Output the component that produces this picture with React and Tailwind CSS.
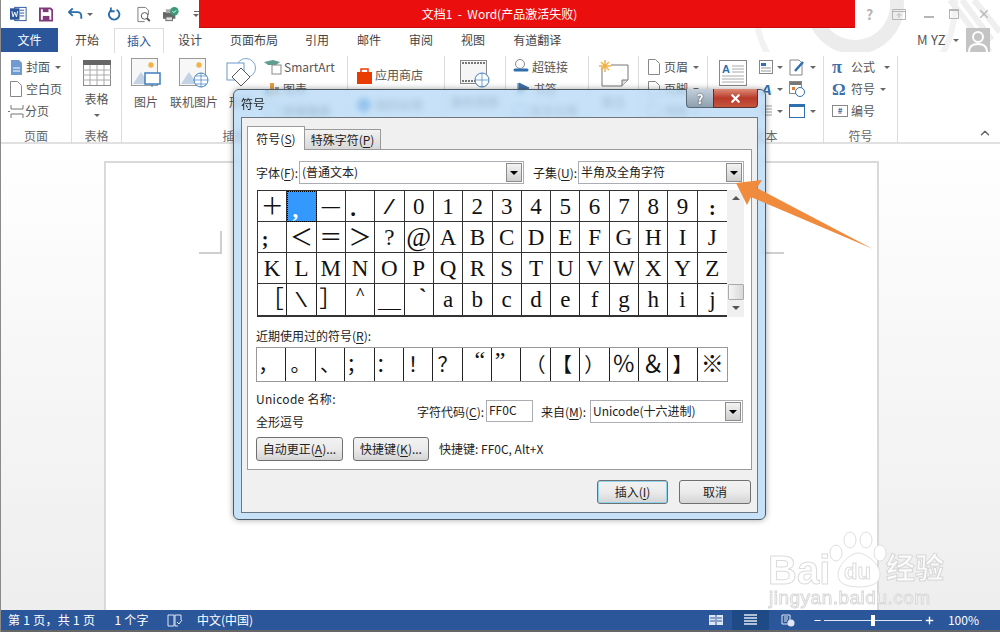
import React from 'react';
import { ChevronUp, Minus, Plus, X } from 'lucide-react';

const FONT = { fontFamily: '"Noto Sans CJK SC", sans-serif' };

const TABS = ['开始', '插入', '设计', '页面布局', '引用', '邮件', '审阅', '视图', '有道翻译'];
const SYMBOLS = [
  '＋', ',', '—', '.', '/', '0', '1', '2', '3', '4', '5', '6', '7', '8', '9', ':',
  ';', '＜', '＝', '＞', '?', '@', 'A', 'B', 'C', 'D', 'E', 'F', 'G', 'H', 'I', 'J',
  'K', 'L', 'M', 'N', 'O', 'P', 'Q', 'R', 'S', 'T', 'U', 'V', 'W', 'X', 'Y', 'Z',
  '［', '\\', '］', '^', '＿', '`', 'a', 'b', 'c', 'd', 'e', 'f', 'g', 'h', 'i', 'j',
];
const RECENT = ['，', '。', '、', '；', '：', '！', '？', '“', '”', '（', '【', '）', '％', '＆', '】', '※'];

// full-width glyphs sit off centre in their cell, same as the Word picker
const GLYPH_CLASS = {
  ',': 'font-bold -translate-x-[6px] translate-y-[3px]',
  '—': 'font-bold text-[18px]',
  '.': 'font-bold -translate-x-[7px] translate-y-[2px]',
  '/': 'scale-x-[1.8]',
  '\\': 'scale-x-[1.8]',
  ':': 'font-bold text-[20px] translate-y-[2px]',
  ';': 'font-bold text-[20px] -translate-x-[7px] translate-y-[2px]',
  '^': 'font-bold text-[17px] -translate-y-[6px]',
  '`': 'font-bold translate-x-[4px] -translate-y-[2px]',
  '@': 'text-[27px]',
  '“': 'text-[24px] translate-x-[3px] -translate-y-[5px]',
  '”': 'text-[24px] -translate-x-[6px] -translate-y-[5px]',
  '％': 'text-[23px]',
  '＆': 'text-[23px]',
  '※': 'text-[23px]',
  '，': '-translate-x-[3px]',
  '；': '-translate-x-[3px]',
  '：': '-translate-x-[3px]',
  '【': '-translate-x-[3px]',
};

function Caret({ className = '' }) {
  return <span className={`inline-block w-0 h-0 border-x-[3px] border-x-transparent border-t-[3px] border-t-[#666] ${className}`} />;
}

function TitleIcons() {
  return (
    <div className="flex items-center h-[28px] pl-[10px]">
      <svg width="18" height="16" viewBox="0 0 18 16" className="mr-[12px]">
        <rect x="5" y="1" width="12" height="14" fill="#fff" stroke="#2b579a" />
        <path d="M10 4h5M10 7h5M10 10h5" stroke="#2b579a" />
        <rect x="0" y="2" width="10" height="12" fill="#2b579a" />
        <path d="M2 5l1.2 6 1.8-5 1.800 5L8 5" fill="none" stroke="#fff" />
      </svg>
      <svg width="15" height="15" viewBox="0 0 15 15" className="mr-[15px]">
        <path d="M1 1h11l2 2v11H1z" fill="none" stroke="#80397b" strokeWidth="2" />
        <path d="M4 1h6v4H4z" fill="#80397b" />
        <rect x="4" y="9" width="7" height="5" fill="#80397b" />
      </svg>
      <svg width="16" height="14" viewBox="0 0 16 14" className="mr-[4px]">
        <path d="M5 1L1 5l4 4M1 5h9a4 4 0 0 1 4 4v3" fill="none" stroke="#2b6cab" strokeWidth="2" />
      </svg>
      <Caret className="mr-[15px]" />
      <svg width="14" height="15" viewBox="0 0 14 15" className="mr-[15px]">
        <path d="M9 2.500a5.500 5.500 0 1 1-5 0M3 0v4h4" fill="none" stroke="#2b6cab" strokeWidth="2" />
      </svg>
      <svg width="15" height="17" viewBox="0 0 15 17" className="mr-[12px]">
        <path d="M1 1h8l3 3v5M1 1v15h7" fill="none" stroke="#777" />
        <circle cx="8" cy="10" r="3.500" fill="#fff" stroke="#555" />
        <path d="M10.500 12.500l3 3" stroke="#555" strokeWidth="2" />
      </svg>
      <svg width="18" height="16" viewBox="0 0 18 16" className="mr-[13px]">
        <rect x="0" y="6" width="13" height="7" fill="#666" />
        <rect x="3" y="3" width="7" height="4" fill="#aaa" />
        <rect x="3" y="11" width="7" height="4" fill="#ddd" stroke="#666" />
        <circle cx="12" cy="5" r="4.500" fill="#3a9b78" />
        <path d="M10 5l1.500 1.500L14 4" fill="none" stroke="#fff" />
      </svg>
      <span className="flex flex-col items-center gap-[2px]">
        <span className="w-[5px] h-px bg-[#666]" />
        <Caret />
      </span>
    </div>
  );
}

function WindowControls() {
  return (
    <div className="flex items-center h-[28px] text-[#b5b5b5]">
      <span className="w-[29px] text-center text-[14px] font-bold">?</span>
      <svg width="14" height="11" viewBox="0 0 14 11" className="mx-[8px]">
        <path d="M.5.5h13v10H.5zM.5 2.500h13M7 9V5M5 6.500L7 4.500l2 2" fill="none" stroke="#b5b5b5" />
      </svg>
      <span className="w-[10px] h-[2px] bg-[#b5b5b5] ml-[10px] mr-[6px] mt-[5px]" />
      <span className="w-[10px] h-[10px] border border-[#b5b5b5] border-t-2 mx-[9px]" />
      <X size={14} strokeWidth={2} className="mx-[9px]" />
    </div>
  );
}

function RowItem({ icon, text, caret, caretClass = 'ml-[5px]', className = '' }) {
  return (
    <div className={`flex items-center h-[22px] whitespace-nowrap ${className}`}>
      {icon}
      {text && <span>{text}</span>}
      {caret && <Caret className={caretClass} />}
    </div>
  );
}

function Big({ icon, text, className = '' }) {
  return (
    <div className={`flex flex-col items-center whitespace-nowrap ${className}`}>
      <div className="h-[34px] flex items-center">{icon}</div>
      <span className="mt-[4px] leading-[16px]">{text}</span>
    </div>
  );
}

function Group({ width, label, children, className = '' }) {
  return (
    <div style={{ width }} className={`relative shrink-0 h-[88px] border-r border-[#dcdcdc] flex flex-col ${className}`}>
      <div className="flex-1 min-h-0">{children}</div>
      <div className="h-[16px] leading-[16px] text-center text-[#666]">{label}</div>
    </div>
  );
}

function PicIcon({ children }) {
  return (
    <svg width="30" height="30" viewBox="0 0 30 30">
      <rect x=".5" y=".5" width="26" height="27" fill="#f7f7f7" stroke="#999" />
      <circle cx="20" cy="7" r="2.700" fill="#f0b44b" />
      <path d="M2 26l8-12 8 12z" fill="#c3d3e6" />
      {children}
    </svg>
  );
}

function Ribbon() {
  const doc = (
    <svg width="12" height="16" viewBox="0 0 12 16" className="mr-[4px]">
      <path d="M.5.5h7l4 4v11H.5z" fill="#fff" stroke="#888" />
    </svg>
  );
  return (
    <div className="flex h-[92px] pt-[4px] border-b-2 border-[#e1e1e1] text-[12px] text-[#555] bg-white">
      <Group width={71} label="页面">
        <div className="pl-[9px]">
          <RowItem text="封面" caret icon={<svg width="13" height="17" viewBox="0 0 13 17" className="mr-[3px]"><path d="M1 1h8l3 3v12H1z" fill="#6f9bd1" /><path d="M3 9h7M3 12h7" stroke="#fff" /></svg>} />
          <RowItem text="空白页" icon={doc} />
          <RowItem text="分页" icon={<svg width="16" height="15" viewBox="0 0 16 15" className="-ml-[2px] mr-px"><path d="M3 1v4h12V1M3 14v-4h12v4M0 7.500h2" fill="none" stroke="#777" /></svg>} />
        </div>
      </Group>
      <Group width={50} label="表格">
        <div className="flex flex-col items-center pt-[4px]">
          <svg width="28" height="26" viewBox="0 0 28 26">
            <rect x=".5" y=".5" width="27" height="25" fill="#fff" stroke="#8a8a8a" />
            <rect width="28" height="5" fill="#666" />
            <path d="M7 5v20M14 5v20M21 5v20M0 10h28M0 15h28M0 20h28" stroke="#aaa" />
          </svg>
          <span className="mt-[5px] leading-[16px]">表格</span>
          <Caret className="mt-[7px]" />
        </div>
      </Group>
      <Group width={226} label="插图">
        <div className="flex pl-[7px]">
          <Big text="图片" className="w-[34px]" icon={<PicIcon><rect x="14" y="15" width="15" height="11" fill="#fff" stroke="#3f7fbf" strokeWidth="1.500" /><path d="M21 26v3" stroke="#3f7fbf" /></PicIcon>} />
          <Big text="联机图片" className="w-[48px] ml-[7px]" icon={<PicIcon><circle cx="22" cy="22" r="7" fill="#fff" stroke="#3f7fbf" /><path d="M15 22h14M22 15v14M17 18h10M17 26h10" stroke="#3f7fbf" strokeWidth=".7" /></PicIcon>} />
          <Big text="形状" className="w-[40px] ml-[3px]" icon={<svg width="30" height="30" viewBox="0 0 30 30"><circle cx="20" cy="10" r="9.500" fill="#fff" stroke="#7aa7d4" /><rect x="1" y="5" width="17" height="17" fill="#fff" stroke="#6b9bc9" /><path d="M15 10l9 9-9 9-9-9z" fill="#fff" stroke="#555" /></svg>} />
          <div className="ml-[3px]">
            <RowItem text="SmartArt" icon={<svg width="18" height="16" viewBox="0 0 18 16" className="mr-[2px]"><path d="M0 3l9-2 7 2-4 3H4z" fill="#5f9e8f" /><rect x="8" y="6" width="9" height="9" fill="#fff" stroke="#888" /></svg>} />
            <RowItem text="图表" icon={<svg width="16" height="14" viewBox="0 0 16 14" className="mr-[3px]"><path d="M1 8h4v6H1z" fill="#3f6fa8" /><path d="M6 1h4v13H6z" fill="#e0a040" /><path d="M11 5h4v9h-4z" fill="#999" /></svg>} />
            <RowItem text="屏幕截图" icon={<svg width="16" height="14" viewBox="0 0 16 14" className="mr-[3px]"><rect x=".5" y=".5" width="15" height="10" fill="#fff" stroke="#5d88b8" /></svg>} />
          </div>
        </div>
      </Group>
      <Group width={97} label="应用程序">
        <div className="pl-[9px] pt-[8px]">
          <RowItem text="应用商店" icon={<svg width="15" height="17" viewBox="0 0 15 17" className="mr-[3px]"><path d="M0 5h15v12H0z" fill="#eb3c00" /><path d="M4 5V2h7v3" fill="none" stroke="#eb3c00" strokeWidth="1.500" /></svg>} />
          <RowItem text="我的应用" className="mt-[8px]" icon={<span className="w-[14px] h-[14px] rounded-full bg-[#2f7fd0] mr-[4px]" />} />
        </div>
      </Group>
      <Group width={61} label="媒体">
        <div className="flex justify-center">
          <Big text="联机视频" icon={<svg width="30" height="30" viewBox="0 0 30 30"><rect x=".5" y="2.500" width="26" height="23" fill="#f5f5f5" stroke="#888" /><path d="M2 5h23M2 23h23" stroke="#777" strokeWidth="2" strokeDasharray="2 1" /><circle cx="22" cy="22" r="7" fill="#fff" stroke="#3f7fbf" /><path d="M15 22h14M22 15v14" stroke="#3f7fbf" strokeWidth=".7" /></svg>} />
        </div>
      </Group>
      <Group width={83} label="链接">
        <div className="pl-[7px]">
          <RowItem text="超链接" icon={<svg width="16" height="16" viewBox="0 0 16 16" className="mr-[3px]"><circle cx="7" cy="5" r="4.500" fill="#fff" stroke="#888" /><path d="M2 11h5M9 11h5" stroke="#2f6fb0" strokeWidth="3" strokeLinecap="round" /></svg>} />
          <RowItem text="书签" icon={<svg width="14" height="14" viewBox="0 0 14 14" className="mx-[3px]"><path d="M2 1v12M3 1l10 5-10 5z" fill="#3f6fa8" stroke="#3f6fa8" /></svg>} />
          <RowItem text="交叉引用" icon={<svg width="14" height="14" viewBox="0 0 14 14" className="mr-[3px]"><rect x="1" y="1" width="12" height="12" fill="#fff" stroke="#5d88b8" /></svg>} />
        </div>
      </Group>
      <Group width={50} label="批注">
        <div className="flex justify-center">
          <Big text="批注" icon={<svg width="30" height="28" viewBox="0 0 30 28"><path d="M3 8v19h20l6-6V6H12" fill="#fff" stroke="#777" /><path d="M23 27v-6h6" fill="#ddd" stroke="#777" /><path d="M6 1v12M0 7h12M2 3l8 8M10 3l-8 8" stroke="#f0b44b" strokeWidth="1.500" /></svg>} />
        </div>
      </Group>
      <Group width={69} label="页眉和页脚">
        <div className="pl-[9px]">
          <RowItem text="页眉" caret icon={doc} />
          <RowItem text="页脚" caret icon={doc} />
          <RowItem text="页码" caret icon={doc} />
        </div>
      </Group>
      <Group width={116} label="文本">
        <div className="flex pl-[11px]">
          <svg width="28" height="26" viewBox="0 0 28 26" className="mt-[4px] shrink-0">
            <rect x=".5" y=".5" width="27" height="25" fill="#fff" stroke="#888" />
            <text x="3" y="13" fontSize="11" fontWeight="700" fill="#2f6fb0" fontFamily="Liberation Sans">A</text>
            <path d="M13 6h12M13 9h12M13 12h12M3 16h22M3 19h22M3 22h22" stroke="#aaa" />
          </svg>
          <div className="ml-[12px] w-[30px]">
            <RowItem caret caretClass="ml-[4px]" icon={<svg width="14" height="14" viewBox="0 0 14 14"><rect x=".5" y=".5" width="13" height="13" fill="#fff" stroke="#888" /><rect x="2" y="3" width="5" height="3" fill="#2f6fb0" /><path d="M2 8h10M2 11h10" stroke="#999" /></svg>} />
            <RowItem caret caretClass="ml-[4px]" icon={<svg width="14" height="14" viewBox="0 0 14 14"><text x="2" y="13" fontSize="15" fontStyle="italic" fontWeight="700" fill="#2f6fb0" fontFamily="Liberation Sans">A</text></svg>} />
            <RowItem caret caretClass="ml-[4px]" icon={<svg width="14" height="14" viewBox="0 0 14 14"><path d="M1 2h12M1 5h12M1 8h12M1 11h12" stroke="#999" /></svg>} />
          </div>
          <div>
            <RowItem caret caretClass="ml-[5px]" icon={<svg width="16" height="17" viewBox="0 0 16 17"><path d="M1 1h9l3 3v12H1z" fill="#fff" stroke="#888" /><path d="M6 12l8-9" stroke="#2f6fb0" strokeWidth="2.500" /></svg>} />
            <RowItem icon={<svg width="16" height="16" viewBox="0 0 16 16"><rect x=".5" y=".5" width="12" height="12" fill="#fff" stroke="#888" /><rect x="1" y="1" width="11" height="3" fill="#777" /><rect x="3" y="6" width="3" height="3" fill="#e07a30" /><circle cx="11" cy="11" r="4.500" fill="#fff" stroke="#2f6fb0" /></svg>} />
            <RowItem caret caretClass="ml-[5px]" icon={<svg width="16" height="14" viewBox="0 0 16 14"><rect x=".5" y=".5" width="15" height="13" fill="#fff" stroke="#2f6fb0" /><rect width="16" height="3" fill="#2f6fb0" /></svg>} />
          </div>
        </div>
      </Group>
      <Group width={74} label="符号">
        <div className="pl-[8px]">
          <div className="flex items-center h-[22px]">
            <span className="w-[19px] text-[18px] leading-none font-bold text-[#3f6fa8]" style={{ fontFamily: '"Liberation Serif", serif' }}>π</span>
            <span>公式</span>
            <Caret className="ml-[9px]" />
          </div>
          <div className="flex items-center h-[22px]">
            <span className="w-[19px] text-[17px] leading-none font-bold text-[#3f6fa8]" style={{ fontFamily: '"Liberation Serif", serif' }}>Ω</span>
            <span>符号</span>
            <Caret className="ml-[5px]" />
          </div>
          <div className="flex items-center h-[22px]">
            <span className="w-[19px]">
              <span className="flex items-center justify-center w-[16px] h-[12px] border border-[#888] text-[8px] leading-none text-[#2f6fb0] font-bold">#</span>
            </span>
            <span>编号</span>
          </div>
        </div>
      </Group>
      <div className="flex-1 flex items-end justify-end pr-[8px] pb-[2px]">
        <ChevronUp size={14} strokeWidth={2.5} color="#666" />
      </div>
    </div>
  );
}

function ComboBox({ text, className = '' }) {
  return (
    <div className={`flex h-[23px] border border-[#abadb3] bg-white ${className}`}>
      <span className="flex-1 pl-[2px] leading-[20px] text-[#222] whitespace-nowrap">{text}</span>
      <span className="w-[16px] m-px flex items-center justify-center border border-[#8c8c8c] bg-gradient-to-b from-[#f3f3f3] to-[#cfcfcf]">
        <span className="w-0 h-0 border-x-[4px] border-x-transparent border-t-[4px] border-t-black" />
      </span>
    </div>
  );
}

function DialogButton({ children, className = '' }) {
  return (
    <div className={`flex items-center justify-center rounded-[3px] border border-[#707070] bg-gradient-to-b from-[#f2f2f2] via-[#ebebeb] to-[#d4d4d4] text-[#222] ${className}`}>
      {children}
    </div>
  );
}

function Key({ children }) {
  return <span className="underline underline-offset-2">{children}</span>;
}

function SymbolCell({ ch, selected, last, bottom }) {
  return (
    <div className={`flex items-center justify-center overflow-hidden ${last ? '' : 'border-r-[1.5px] border-[#222]'} ${bottom ? '' : 'border-b-[1.5px] border-[#333]'} ${selected ? 'bg-[#3399ff] text-white outline-1 outline-dotted outline-black -outline-offset-1' : 'text-[#111]'}`}>
      <span className={`inline-block ${GLYPH_CLASS[ch] || ''}`}>{ch}</span>
    </div>
  );
}

function SymbolDialog() {
  const serif = { fontFamily: '"Liberation Serif", "Noto Sans CJK SC", serif' };
  return (
    <div className="absolute left-[232px] top-[89px] w-[533px] h-[431px] rounded-[6px] border border-[#4d5a66] bg-[#b4d8f6]/75 backdrop-blur-[3px] shadow-[0_0_6px_rgba(0,0,0,0.35)] text-[12px] text-[#222] flex flex-col">
      <div className="relative h-[27px] shrink-0 pl-[7px] leading-[27px] text-[#222]">
        符号
        <div className="absolute right-[7px] -top-px flex h-[19px]">
          <div className="w-[27px] flex items-center justify-center rounded-bl-[4px] border border-t-0 border-r-0 border-[#5a6670] bg-gradient-to-b from-[#c4d0dc] to-[#8fa0b0]">
            <span className="text-[13px] leading-none font-bold text-white [text-shadow:0_0_2px_#333]">?</span>
          </div>
          <div className="w-[45px] flex items-center justify-center rounded-br-[4px] border border-t-0 border-[#5a3030] bg-gradient-to-b from-[#dd8a78] via-[#b8392a] to-[#c4553f]">
            <X size={13} strokeWidth={4} color="#fff" />
          </div>
        </div>
      </div>
      <div className="flex-1 mx-[7px] mb-[6px] border border-[#6e7780] bg-[#f0f0f0] px-[5px] pt-[8px] flex flex-col">
        <div className="flex items-end h-[24px] relative z-10">
          <div className="w-[58px] h-[24px] bg-white border border-b-0 border-[#9a9a9a] text-center leading-[24px]">符号(<Key>S</Key>)</div>
          <div className="w-[76px] h-[21px] bg-gradient-to-b from-[#f2f2f2] to-[#d8d8d8] border border-l-0 border-[#9a9a9a] text-center leading-[20px]">特殊字符(<Key>P</Key>)</div>
        </div>
        <div className="h-[321px] -mt-px border border-[#9a9a9a] bg-white pl-[8px] pt-[11px]">
          <div className="flex items-center">
            <span className="w-[43px]">字体(<Key>F</Key>):</span>
            <ComboBox text="(普通文本)" className="w-[225px]" />
            <span className="ml-[9px] w-[45px]">子集(<Key>U</Key>):</span>
            <ComboBox text="半角及全角字符" className="w-[166px]" />
          </div>
          <div className="flex mt-[6px]">
            <div className="w-[470px] h-[127px] ml-px border-t-[1.5px] border-l-[1.5px] border-b-[2px] border-[#333] grid grid-cols-16 grid-rows-4 text-[23px] leading-none" style={serif}>
              {SYMBOLS.map((ch, i) => (
                <SymbolCell key={i} ch={ch} selected={i === 1} last={(i + 1) % 16 === 0} bottom={i >= 48} />
              ))}
            </div>
            <div className="w-[17px] h-[127px] bg-[#f0f0f0] flex flex-col items-center">
              <span className="mt-[6px] w-0 h-0 border-x-[4px] border-x-transparent border-b-[4px] border-b-[#555]" />
              <span className="mt-auto w-[16px] h-[16px] border border-[#aaa] rounded-[1px] bg-gradient-to-r from-[#f6f6f6] to-[#d8d8d8]" />
              <span className="mt-[6px] mb-[7px] w-0 h-0 border-x-[4px] border-x-transparent border-t-[4px] border-t-[#555]" />
            </div>
          </div>
          <div className="mt-[10px] leading-[18px]">近期使用过的符号(<Key>R</Key>):</div>
          <div className="w-[472px] h-[35px] mt-[2px] border border-[#999] grid grid-cols-16 text-[20px] leading-none" style={serif}>
            {RECENT.map((ch, i) => (
              <SymbolCell key={i} ch={ch} last={i === 15} bottom />
            ))}
          </div>
          <div className="flex mt-[7px] h-[48px]">
            <div className="w-[161px] pt-[1px]">
              <div className="leading-[18px] tracking-[0.3px]">Unicode 名称:</div>
              <div className="mt-[5px] leading-[18px]">全形逗号</div>
            </div>
            <div className="flex items-start pt-[11px]">
              <span className="w-[69px] mt-[3px]">字符代码(<Key>C</Key>):</span>
              <div className="w-[47px] h-[22px] border border-[#abadb3] bg-white pl-[2px] leading-[18px]">FF0C</div>
              <span className="ml-[8px] w-[49px] mt-[3px]">来自(<Key>M</Key>):</span>
              <ComboBox text="Unicode(十六进制)" className="w-[153px]" />
            </div>
          </div>
          <div className="flex items-center">
            <DialogButton className="w-[87px] h-[24px]">自动更正(<Key>A</Key>)...</DialogButton>
            <DialogButton className="w-[76px] h-[24px] ml-[10px]">快捷键(<Key>K</Key>)...</DialogButton>
            <span className="ml-[10px]">快捷键: FF0C, Alt+X</span>
          </div>
        </div>
        <div className="flex justify-end gap-[11px] pr-[1px] mt-[10px]">
          <DialogButton className="w-[71px] h-[24px] border-[#3c9fc8] shadow-[inset_0_0_0_1px_#8fd4ee]">插入(<Key>I</Key>)</DialogButton>
          <DialogButton className="w-[72px] h-[24px]">取消</DialogButton>
        </div>
      </div>
    </div>
  );
}

function StatusBar() {
  return (
    <div className="shrink-0 h-[22px] border-b-2 border-[#666] bg-[#2b579a] flex items-center text-[12px] text-white">
      <span className="ml-[7px] whitespace-pre tracking-[0.3px]">第 1 页，共 1 页</span>
      <span className="ml-[19px] whitespace-pre tracking-[0.3px]">1 个字</span>
      <svg width="16" height="13" viewBox="0 0 16 13" className="ml-[18px]">
        <path d="M1 1h6v11H1zM8 1h6v5M8 1v11h3M10 8l2 2 3-4" fill="none" stroke="#dfe7f3" />
      </svg>
      <span className="ml-[14px]">中文(中国)</span>
      <div className="ml-auto flex items-center h-full">
        <svg width="14" height="12" viewBox="0 0 14 12">
          <path d="M0 1h6.500v10H0zM7.500 1H14v10H7.500z" fill="#dfe7f3" />
          <path d="M1 4h5M1 7h5M8 4h5M8 7h5" stroke="#2b579a" />
        </svg>
        <div className="ml-[9px] w-[37px] h-full bg-[#1e4a86] flex items-center justify-center">
          <svg width="13" height="12" viewBox="0 0 13 12"><path d="M0 1h13M0 4h13M0 7h13M0 10h13" stroke="#dfe7f3" strokeWidth="1.500" /></svg>
        </div>
        <svg width="14" height="13" viewBox="0 0 14 13" className="ml-[12px]">
          <path d="M1 1h8v9H1z" fill="none" stroke="#dfe7f3" />
          <path d="M3 3h4M3 5h4M3 7h3" stroke="#dfe7f3" />
          <circle cx="10" cy="9" r="3.500" fill="#dfe7f3" />
        </svg>
        <Minus size={9} strokeWidth={3} className="ml-[18px]" />
        <div className="relative ml-[2px] w-[98px] h-px bg-[#dfe7f3]">
          <span className="absolute left-[47px] -top-[5px] w-[4px] h-[11px] bg-white" />
        </div>
        <Plus size={11} strokeWidth={3} className="ml-[2px]" />
        <span className="ml-[13px] mr-[21px]">100%</span>
      </div>
    </div>
  );
}

export default function App() {
  return (
    <div className="relative w-[1000px] h-[632px] overflow-hidden bg-white border-l border-[#8a8a8a] flex flex-col" style={FONT}>
      <svg className="absolute right-0 top-0" width="300" height="52" viewBox="0 0 300 52">
        <circle cx="155" cy="5" r="42" fill="none" stroke="#ececec" strokeWidth="14" />
        <circle cx="155" cy="5" r="100" fill="none" stroke="#f2f2f2" strokeWidth="6" />
        <path d="M250 0l40 52M262 0l30 40M274 0l26 32" stroke="#efefef" strokeWidth="6" />
      </svg>
      <div className="relative flex h-[28px] shrink-0 -ml-px">
        <div className="w-[199px]"><TitleIcons /></div>
        <div className="w-[657px] h-[28px] pr-[55px] bg-[#ea0e0e] border-b border-[#c50d0d] text-white text-[12px] text-center leading-[27px] whitespace-pre">文档1  -  Word(产品激活失败)</div>
        <div className="flex-1"><WindowControls /></div>
      </div>
      <div className="relative flex h-[24px] shrink-0 text-[12px] text-[#444]">
        <div className="w-[57px] bg-[#2b579a] text-white text-center leading-[24px] mr-[3px]">文件</div>
        {TABS.map((t) => (
          <div key={t} className={t === '插入' ? 'px-[12px] h-[25px] ml-px leading-[24px] bg-white border border-b-0 border-[#dcdcdc] text-[#2b579a] relative z-10' : t === '页面布局' ? 'pl-[14px] pr-[13px] leading-[24px]' : 'px-[14px] leading-[24px]'}>{t}</div>
        ))}
        <div className="ml-auto flex items-center pr-[10px]">
          <span className="text-[#555] text-[13px] tracking-[0.3px]">M YZ</span>
          <Caret className="ml-[7px] mr-[7px]" />
          <div className="w-[24px] h-[24px] bg-[#c4c4c4] overflow-hidden">
            <svg width="24" height="24" viewBox="0 0 24 24"><circle cx="12" cy="9" r="5" fill="none" stroke="#fff" strokeWidth="2" /><path d="M3 24c0-6 4-8 9-8s9 2 9 8" fill="none" stroke="#fff" strokeWidth="2" /></svg>
          </div>
        </div>
      </div>
      <Ribbon />
      <div className="relative flex-1 min-h-0 bg-gradient-to-b from-white via-[#f6f6f6] to-[#eeeeee] pt-[17px] pl-[103px] pr-[121px]">
        <div className="relative h-full bg-white border-t-2 border-x-2 border-[#d9d9d9]">
          <span className="absolute left-[93px] top-[68px] w-[23px] h-[23px] border-r-2 border-b-2 border-[#cfcfcf]" />
          <span className="absolute right-[93px] top-[68px] w-[23px] h-[23px] border-l-2 border-b-2 border-[#cfcfcf]" />
        </div>
      </div>
      <StatusBar />
      <SymbolDialog />
      <svg className="absolute -left-px top-0 pointer-events-none" width="1000" height="632" viewBox="0 0 1000 632">
        <polygon points="736,183 762,180 757,188 873,249 751,197 747,205" fill="#f08a3c" />
      </svg>
      <div className="absolute left-[765px] top-[528px] w-[235px] h-[80px] pointer-events-none select-none">
        <svg className="absolute left-[60px] top-[3px]" width="70" height="58" viewBox="0 0 70 58">
          <ellipse cx="10" cy="22" rx="6" ry="8" fill="#fff" stroke="#dedede" />
          <ellipse cx="24" cy="9" rx="6" ry="8" fill="#fff" stroke="#dedede" />
          <ellipse cx="40" cy="9" rx="6" ry="8" fill="#fff" stroke="#dedede" />
          <ellipse cx="54" cy="22" rx="6" ry="8" fill="#fff" stroke="#dedede" />
          <path d="M14 50C6 38 24 22 32 22C42 22 60 38 52 50C46 58 20 58 14 50Z" fill="#fff" stroke="#dedede" />
        </svg>
        <span className="absolute left-[2px] top-[22px] text-[40px] leading-none font-bold text-white/80 [-webkit-text-stroke:1px_#dcdcdc] whitespace-nowrap" style={{ fontFamily: '"Liberation Sans", sans-serif' }}>Bai</span>
        <span className="absolute left-[78px] top-[33px] text-[22px] leading-none font-bold text-white/80 [-webkit-text-stroke:1px_#dcdcdc]" style={{ fontFamily: '"Liberation Sans", sans-serif' }}>du</span>
        <span className="absolute left-[120px] top-[24px] text-[29px] leading-none font-bold text-white/80 [-webkit-text-stroke:1px_#d6d6d6] whitespace-nowrap">经验</span>
        <span className="absolute left-[3px] top-[60px] text-[19px] leading-none tracking-[0.5px] text-white/80 [-webkit-text-stroke:1px_#d8d8d8] whitespace-nowrap" style={{ fontFamily: '"Liberation Sans", sans-serif' }}>jingyan.baidu.com</span>
      </div>
    </div>
  );
}
